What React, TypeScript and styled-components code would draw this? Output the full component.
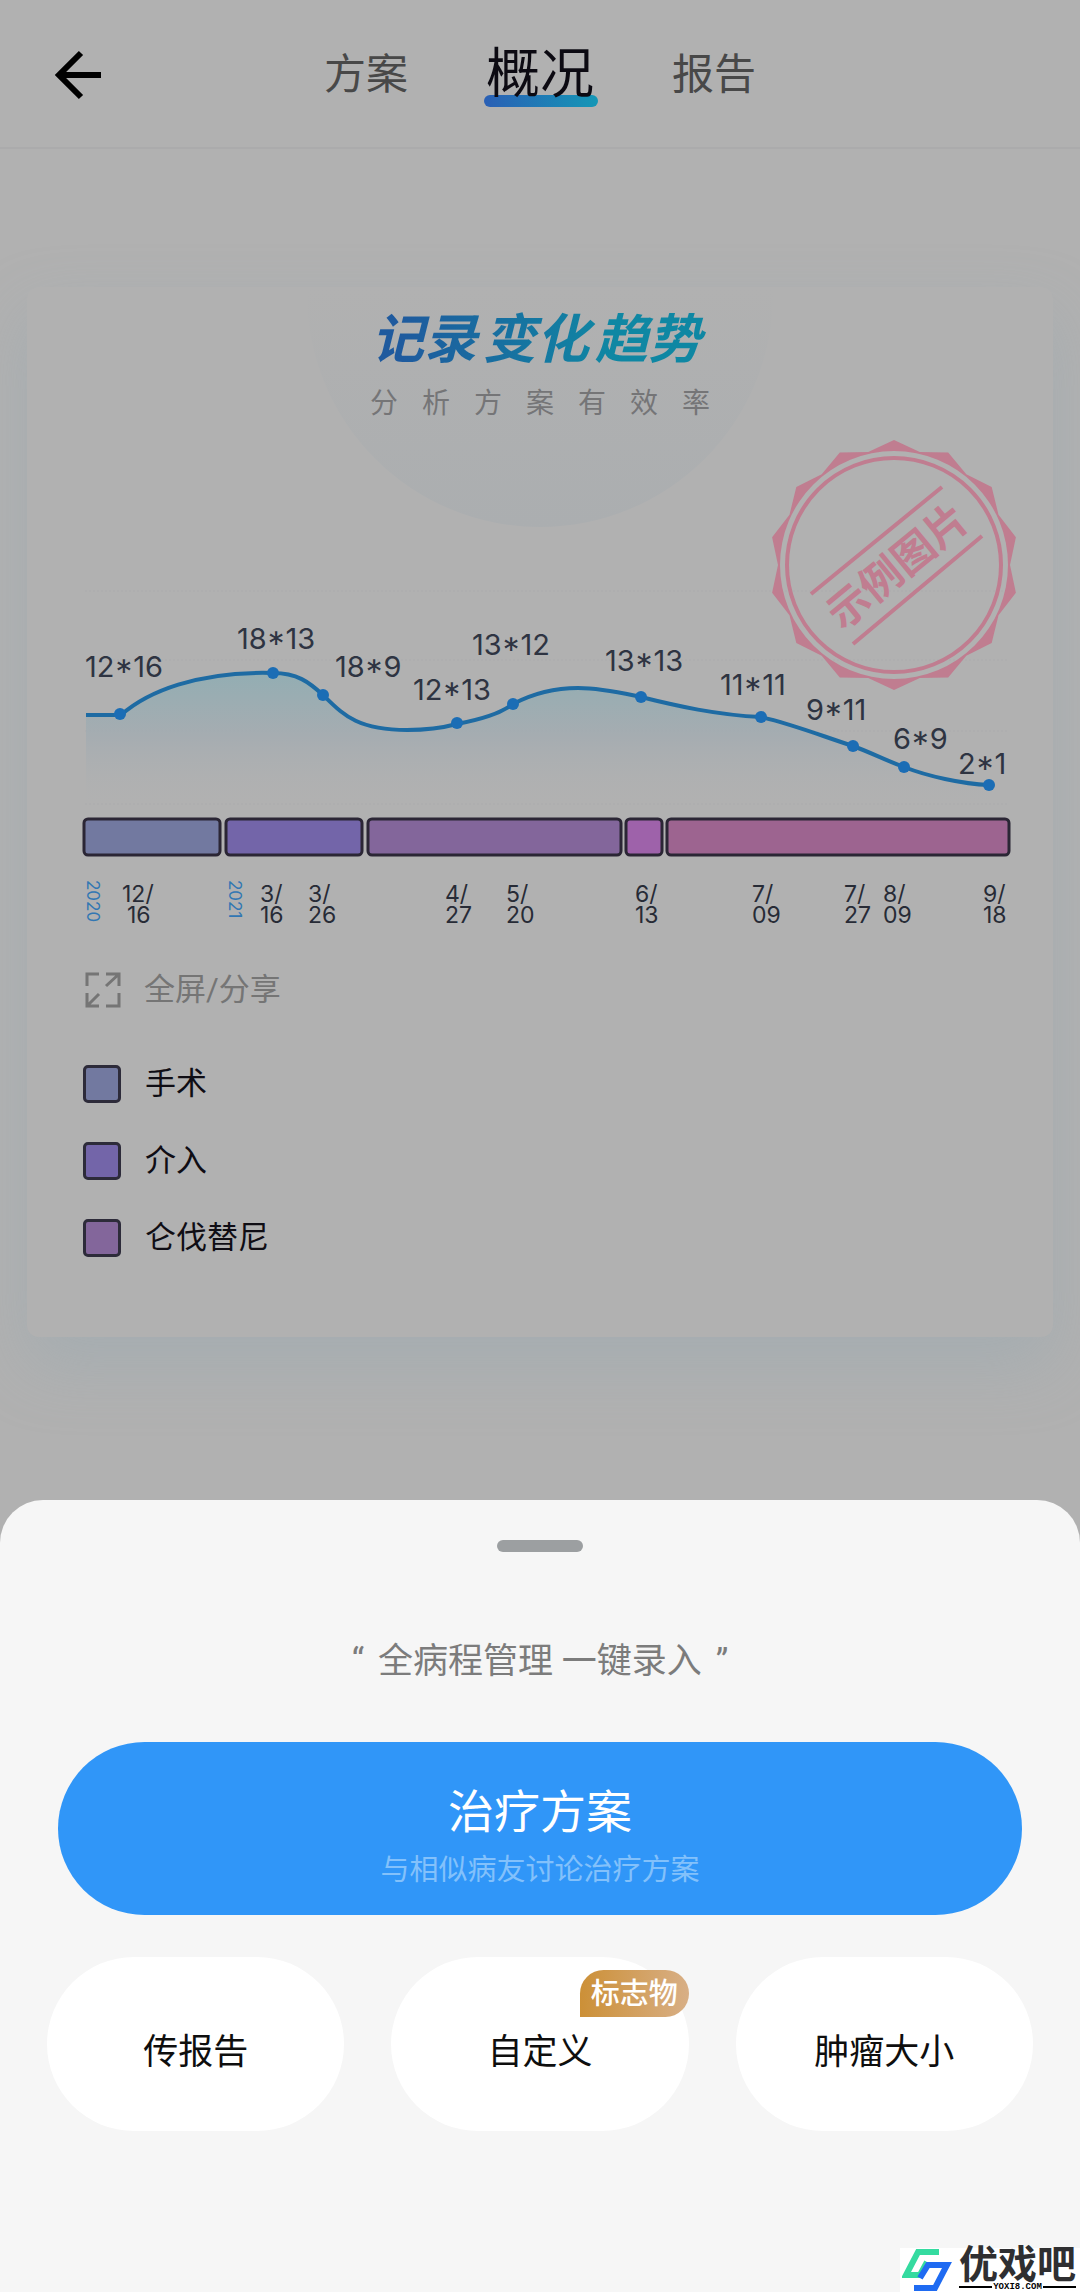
import React from 'react';
import styled, {createGlobalStyle} from 'styled-components';

const GlobalStyle = createGlobalStyle`
    *,
    *::before,
    *::after {
        box-sizing: border-box;
    }

    body {
        margin: 0;
        background-color: #b1b1b1;
        font-family: Roboto, 'Noto Sans CJK SC', sans-serif;
    }

    button {
        padding: 0;
        border: none;
        background: none;
        font: inherit;
        color: inherit;
        cursor: pointer;
    }
`;

const Page = styled.div`
    position: relative;
    display: flex;
    flex-direction: column;
    min-height: 100vh;
    overflow: hidden;
`;

const Header = styled.header`
    display: grid;
    grid-template-columns: 1fr auto 1fr;
    align-items: center;
    height: 149px;
    padding: 2px 54px 0;
    border-bottom: 2px solid #ababac;
`;

const BackButton = styled.button`
    display: flex;
    justify-self: start;
`;

const Tabs = styled.nav`
    display: flex;
    align-items: center;
    gap: 78px;
`;

const Tab = styled.button<{ $active?: boolean }>`
    position: relative;
    z-index: 0;
    font-size: ${({$active}) => $active ? '54px' : '42px'};
    line-height: 64px;
    color: ${({$active}) => $active ? '#0c0a12' : '#484848'};

    &::after {
        content: '';
        display: ${({$active}) => $active ? 'block' : 'none'};
        position: absolute;
        z-index: -1;
        left: -2px;
        right: -4px;
        bottom: 0;
        height: 12px;
        border-radius: 6px;
        background: linear-gradient(90deg, #2a5fb5, #1597b6);
    }
`;

const Content = styled.main`
    padding: 138px 27px 163px;
`;

const Card = styled.section`
    position: relative;
    z-index: 0;
    padding: 25px 0 80px;
    border-radius: 12px;
    background-color: #b1b1b1;
    box-shadow: 0 28px 64px rgba(150, 168, 178, 0.45);

    &::before {
        content: '';
        position: absolute;
        z-index: -1;
        top: 0;
        left: 50%;
        width: 466px;
        height: 240px;
        margin-left: -233px;
        border-radius: 0 0 233px 233px;
        background: linear-gradient(#b1b1b1, #abaeb0);
    }
`;

const CardHead = styled.div`
    display: flex;
    flex-direction: column;
    align-items: center;
    gap: 16px;
`;

const Title = styled.h1`
    display: flex;
    gap: 6px;
    margin: 0;
    padding: 0 16px 0 8px;
    font-size: 53px;
    line-height: 56px;
    font-style: italic;
    font-weight: 700;
    color: transparent;
    background: linear-gradient(90deg, #1f5a9e 10%, #0f87a3 70%);
    background-clip: text;
`;

const Subtitle = styled.p`
    display: flex;
    gap: 24px;
    margin: 0;
    font-size: 28px;
    line-height: 40px;
    color: #757577;
`;

const Stamp = styled.svg`
    position: absolute;
    top: 152px;
    right: 33px;
    width: 252px;
    height: 252px;
`;

const Chart = styled.svg`
    display: block;
    width: 100%;
    height: auto;
    margin-top: 156px;
    font-family: Inter, sans-serif;
`;

const FullscreenButton = styled.button`
    display: flex;
    align-items: center;
    gap: 22px;
    margin: 38px 0 0 57px;
    font-size: 31px;
    line-height: 44px;
    color: #757575;
`;

const Legend = styled.ul`
    display: flex;
    flex-direction: column;
    gap: 39px;
    margin: 53px 0 0 56px;
    padding: 0;
    list-style: none;
`;

const LegendItem = styled.li<{ $color: string }>`
    display: flex;
    align-items: center;
    gap: 24px;
    height: 38px;
    font-size: 31px;
    line-height: 38px;
    color: #0f0d14;

    &::before {
        content: '';
        width: 38px;
        height: 38px;
        border: 3px solid #2d2b3a;
        border-radius: 5px;
        background-color: ${({$color}) => $color};
    }
`;

const Sheet = styled.section`
    flex: 1;
    display: flex;
    flex-direction: column;
    align-items: center;
    padding: 40px 47px 160px;
    border-radius: 43px 43px 0 0;
    background-color: #f6f6f6;
`;

const Handle = styled.div`
    width: 86px;
    height: 12px;
    border-radius: 6px;
    background-color: #9c9fa1;
`;

const Slogan = styled.p`
    display: flex;
    gap: 14px;
    margin: 86px 0 56px;
    font-size: 35px;
    line-height: 48px;
    color: #7c7c7c;
`;

const PrimaryButton = styled.button`
    align-self: stretch;
    display: flex;
    flex-direction: column;
    align-items: center;
    justify-content: center;
    gap: 6px;
    height: 173px;
    margin: 0 11px;
    padding-top: 16px;
    border-radius: 87px;
    background-color: #3096f8;
    font-size: 46px;
    line-height: 60px;
    color: #fff;

    small {
        font-size: 29px;
        line-height: 44px;
        color: #83c1fb;
    }
`;

const Actions = styled.div`
    align-self: stretch;
    display: grid;
    grid-template-columns: repeat(3, 1fr);
    gap: 47px;
    margin-top: 42px;
`;

const ActionButton = styled.button`
    position: relative;
    height: 174px;
    padding-top: 9px;
    border-radius: 87px;
    background-color: #fff;
    font-size: 35px;
    color: #0e0e0e;
`;

const Badge = styled.span`
    position: absolute;
    top: 13px;
    right: 0;
    padding: 1px 11px 0;
    border-radius: 24px 24px 24px 0;
    background: linear-gradient(90deg, #cc9037, #d8af86);
    font-size: 29px;
    font-weight: 500;
    line-height: 46px;
    color: #fff;
`;

const Watermark = styled.div`
    position: absolute;
    right: 0;
    bottom: 0;
    display: flex;
    gap: 7px;
    height: 44px;
    padding: 0 4px 0 2px;
    background-color: #fff;
`;

const WatermarkText = styled.div`
    display: flex;
    flex-direction: column;
    font-size: 39px;
    font-weight: 700;
    line-height: 34px;
    color: #2f2f31;
`;

const WatermarkSite = styled.span`
    display: flex;
    align-items: center;
    gap: 1px;
    font-family: 'Liberation Mono', monospace;
    font-size: 9px;
    line-height: 10px;
    color: #000;

    &::before,
    &::after {
        content: '';
        flex: 1;
        height: 2px;
        background-color: #000;
    }
`;

const stampColor = '#c07d90';
const titleWords = ['记录', '变化', '趋势'];
const subtitle = '分析方案有效率';

const points = [
    {x: 93, y: 134, label: '12*16', labelX: 58, labelY: 97},
    {x: 246, y: 93, label: '18*13', labelX: 210, labelY: 69},
    {x: 296, y: 115, label: '18*9', labelX: 308, labelY: 97},
    {x: 430, y: 143, label: '12*13', labelX: 386, labelY: 120},
    {x: 486, y: 124, label: '13*12', labelX: 445, labelY: 75},
    {x: 614, y: 117, label: '13*13', labelX: 578, labelY: 91},
    {x: 734, y: 137, label: '11*11', labelX: 693, labelY: 115},
    {x: 826, y: 166, label: '9*11', labelX: 779, labelY: 140},
    {x: 877, y: 187, label: '6*9', labelX: 866, labelY: 169},
    {x: 962, y: 205, label: '2*1', labelX: 931, labelY: 194},
];

const curve = 'M59 135H94C120 112 170 91 246 93C270 93 282 102 296 115C315 133 328 150 380 150'
    + 'C400 150 415 148 430 144C455 139 472 134 486 124C505 114 525 108 551 108C575 108 595 113 614 117'
    + 'C650 126 690 135 734 137C765 144 795 156 826 166C845 173 860 181 877 187C900 196 935 204 962 205';

const stages = [
    {x: 56, width: 138, color: '#7279a0'},
    {x: 198, width: 138, color: '#7365a9'},
    {x: 340, width: 255, color: '#83669b'},
    {x: 598, width: 38, color: '#9e62aa'},
    {x: 639, width: 344, color: '#9d6490'},
];

const dates = [
    {x: 95, month: '12', day: '16', dayX: 100},
    {x: 233, month: '3', day: '16'},
    {x: 281, month: '3', day: '26'},
    {x: 418, month: '4', day: '27'},
    {x: 479, month: '5', day: '20'},
    {x: 608, month: '6', day: '13'},
    {x: 725, month: '7', day: '09'},
    {x: 817, month: '7', day: '27'},
    {x: 856, month: '8', day: '09'},
    {x: 956, month: '9', day: '18'},
];

const years = [
    {x: 60, year: '2020'},
    {x: 202, year: '2021'},
];

const legend = [
    {name: '手术', color: '#7279a0'},
    {name: '介入', color: '#7365a9'},
    {name: '仑伐替尼', color: '#83669b'},
];

const actions = [
    {name: '传报告'},
    {name: '自定义', badge: '标志物'},
    {name: '肿瘤大小'},
];

/**
 * Builds the toothed outline of the stamp.
 *
 * @param teeth
 * @param outer
 * @param inner
 * @return {string}
 */
function toothedRing(teeth: number, outer: number, inner: number): string {
    const corners: string[] = [];

    for (let i = 0; i < teeth * 2; i++) {
        const radius = i % 2 === 0 ? outer : inner;
        const angle = (i * Math.PI) / teeth - Math.PI / 2;
        corners.push(`${(radius * Math.cos(angle)).toFixed(1)} ${(radius * Math.sin(angle)).toFixed(1)}`);
    }

    return `M${corners.join('L')}ZM-114 0a114 114 0 1 0 228 0a114 114 0 1 0 -228 0Z`;
}

function ExampleStamp() {
    return (
        <Stamp viewBox='-126 -126 252 252' fill='none' stroke={stampColor}>
            <path d={toothedRing(14, 125, 116)} fill={stampColor} fillRule='evenodd' stroke='none' />
            <circle r='107' strokeWidth='4' />
            <path d='M-83 29L48 -78M-41 79L88 -29' strokeWidth='4' />
            <text
                transform='rotate(-39.5)'
                x='2'
                y='18'
                textAnchor='middle'
                fontSize='42'
                fontWeight='700'
                fill={stampColor}
                stroke='none'
            >
                示例图片
            </text>
        </Stamp>
    );
}

function TrendChart() {
    return (
        <Chart viewBox='0 0 1026 350'>
            <defs>
                <linearGradient id='area' x1='0' y1='0' x2='0' y2='1'>
                    <stop offset='0' stopColor='#8fadb3' stopOpacity='0.9' />
                    <stop offset='0.5' stopColor='#a2abb1' stopOpacity='0.75' />
                    <stop offset='1' stopColor='#b0b1b2' stopOpacity='0.1' />
                </linearGradient>
            </defs>
            {[11, 80, 151, 224].map(y => (
                <path key={y} d={`M58 ${y}H980`} stroke='#a9a9ab' strokeDasharray='2 2' opacity='0.6' />
            ))}
            <path d={`${curve}V222H59Z`} fill='url(#area)' />
            <path d={curve} fill='none' stroke='#1e6ba3' strokeWidth='4' />
            {points.map(point => (
                <g key={point.x}>
                    <circle cx={point.x} cy={point.y} r='6' fill='#1b6db5' />
                    <text x={point.labelX} y={point.labelY} fontSize='29' fill='#2e3442'>{point.label}</text>
                </g>
            ))}
            {stages.map(stage => (
                <rect
                    key={stage.x}
                    x={stage.x + 1}
                    y='239'
                    width={stage.width - 2}
                    height='36'
                    rx='4'
                    fill={stage.color}
                    stroke='#2b2635'
                    strokeWidth='3'
                />
            ))}
            {years.map(({x, year}) => (
                <text key={year} transform={`translate(${x} 300) rotate(90)`} fontSize='17' fill='#3277b3'>
                    {year}
                </text>
            ))}
            {dates.map(date => (
                <text key={date.x} fontSize='23' fill='#272b36'>
                    <tspan x={date.x} y='322'>{date.month}/</tspan>
                    <tspan x={date.dayX || date.x} y='343'>{date.day}</tspan>
                </text>
            ))}
        </Chart>
    );
}

function Logo() {
    return (
        <svg width='50' height='44' viewBox='0 0 50 44' fill='none' strokeWidth='6'>
            <path d='M37 4H16L4 27H18L25 14' stroke='#35dba0' />
            <path d='M18 30L26 17H45L33 40H12' stroke='#1f6bf2' />
        </svg>
    );
}

export default function App() {
    return (
        <Page>
            <GlobalStyle />
            <Header>
                <BackButton type='button' aria-label='返回'>
                    <svg width='48' height='50' viewBox='0 0 48 50' fill='none' stroke='#000' strokeWidth='6'>
                        <path d='M27 3L5 25L27 47M4 25H47' />
                    </svg>
                </BackButton>
                <Tabs>
                    <Tab type='button'>方案</Tab>
                    <Tab type='button' $active>概况</Tab>
                    <Tab type='button'>报告</Tab>
                </Tabs>
            </Header>
            <Content>
                <Card>
                    <CardHead>
                        <Title>
                            {titleWords.map(word => <span key={word}>{word}</span>)}
                        </Title>
                        <Subtitle>
                            {subtitle.split('').map(char => <span key={char}>{char}</span>)}
                        </Subtitle>
                    </CardHead>
                    <TrendChart />
                    <ExampleStamp />
                    <FullscreenButton type='button'>
                        <svg width='38' height='38' viewBox='0 0 38 38' fill='none' stroke='currentColor' strokeWidth='3'>
                            <path d='M3 15V3H15M22 3H35V15M35 3L22 15M3 22V35H15M3 35L15 23M22 35H35V22' />
                        </svg>
                        全屏/分享
                    </FullscreenButton>
                    <Legend>
                        {legend.map(({name, color}) => <LegendItem key={name} $color={color}>{name}</LegendItem>)}
                    </Legend>
                </Card>
            </Content>
            <Sheet>
                <Handle />
                <Slogan>
                    <span>“</span>
                    <span>全病程管理 一键录入</span>
                    <span>”</span>
                </Slogan>
                <PrimaryButton type='button'>
                    治疗方案
                    <small>与相似病友讨论治疗方案</small>
                </PrimaryButton>
                <Actions>
                    {actions.map(({name, badge}) => (
                        <ActionButton key={name} type='button'>
                            {name}
                            {badge && <Badge>{badge}</Badge>}
                        </ActionButton>
                    ))}
                </Actions>
            </Sheet>
            <Watermark>
                <Logo />
                <WatermarkText>
                    优戏吧
                    <WatermarkSite>YOXI8.COM</WatermarkSite>
                </WatermarkText>
            </Watermark>
        </Page>
    );
}
